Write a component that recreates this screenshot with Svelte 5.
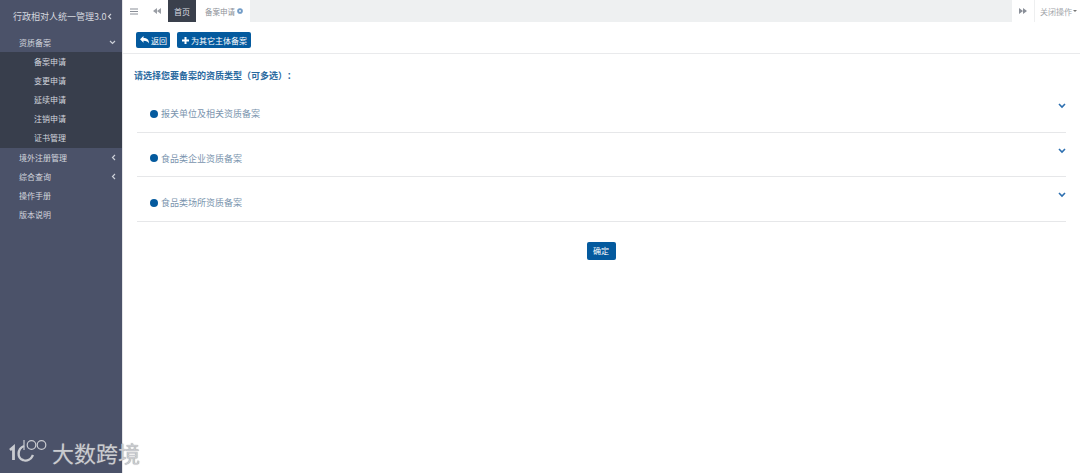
<script>
  const subItems = ["备案申请", "变更申请", "延续申请", "注销申请", "证书管理"];
  const types = ["报关单位及相关资质备案", "食品类企业资质备案", "食品类场所资质备案"];
</script>

<div class="page">
  <aside class="sidebar">
    <div class="brand">
      <span>行政相对人统一管理3.0</span>
      <svg class="chev" width="5" height="7" viewBox="0 0 5 7"><path d="M4 1 1.500 3.500 4 6" /></svg>
    </div>
    <div class="nav-item open">
      <span>资质备案</span>
      <svg class="chev" width="7" height="5" viewBox="0 0 7 5"><path d="M1 1 3.500 3.500 6 1" /></svg>
    </div>
    <div class="sub">
      {#each subItems as item}
        <div class="sub-item">{item}</div>
      {/each}
    </div>
    <div class="nav-item">
      <span>境外注册管理</span>
      <svg class="chev" width="5" height="7" viewBox="0 0 5 7"><path d="M4 1 1.500 3.500 4 6" /></svg>
    </div>
    <div class="nav-item">
      <span>综合查询</span>
      <svg class="chev" width="5" height="7" viewBox="0 0 5 7"><path d="M4 1 1.500 3.500 4 6" /></svg>
    </div>
    <div class="nav-item"><span>操作手册</span></div>
    <div class="nav-item"><span>版本说明</span></div>
  </aside>

  <div class="main">
    <div class="tabs">
      <div class="tab-btn menu">
        <svg width="8" height="7" viewBox="0 0 8 7"><path d="M0 1h8M0 3.500h8M0 6h8" stroke="#8a8f98" fill="none" /></svg>
      </div>
      <div class="tab-btn back">
        <svg width="8" height="6" viewBox="0 0 8 6"><path d="M4 0v6L0 3zM8 0v6L4 3z" fill="#9a9ea5" /></svg>
      </div>
      <div class="tab active">首页</div>
      <div class="tab current">
        备案申请
        <svg width="6" height="6" viewBox="0 0 7 7">
          <circle cx="3.500" cy="3.500" r="3.300" fill="#6f9ac6" />
          <path d="M2.200 2.200 4.800 4.800M4.800 2.200 2.200 4.800" stroke="#fff" stroke-width=".8" />
        </svg>
      </div>
      <div class="tab-fill"></div>
      <div class="tab-btn forward">
        <svg width="8" height="6" viewBox="0 0 8 6"><path d="M0 0v6l4-3zM4 0v6l4-3z" fill="#8a8f98" /></svg>
      </div>
      <div class="close-ops">关闭操作<i></i></div>
    </div>

    <div class="toolbar">
      <button class="btn">
        <svg width="9" height="8" viewBox="0 0 9 8"><path d="M3.500 0v2C7 2 9 3.500 9 7.500 8 5.500 6.500 4.700 3.500 4.700v2L0 3.300z" fill="#fff" /></svg>
        返回
      </button>
      <button class="btn wide">
        <svg width="7" height="7" viewBox="0 0 7 7"><path d="M2.500 0h2v2.500H7v2H4.500V7h-2V4.500H0v-2h2.500z" fill="#fff" /></svg>
        为其它主体备案
      </button>
    </div>

    <div class="content">
      <h3 class="prompt">请选择您要备案的资质类型（可多选）：</h3>
      <div class="type-list">
        {#each types as t}
          <div class="type-row">
            <span class="dot"></span>
            <span class="type-name">{t}</span>
            <svg class="type-chev" width="8" height="6" viewBox="0 0 8 6"><path d="M1 1 4 4 7 1" /></svg>
          </div>
        {/each}
      </div>
      <div class="confirm-wrap">
        <button class="btn confirm">确定</button>
      </div>
    </div>
  </div>

  <div class="watermark">
    <svg width="42" height="26" viewBox="0 0 42 26" fill="none" stroke="#c9cbd0">
      <path d="M2 11 5.500 8V21" stroke-width="2.800" />
      <path d="M16 7C9 10 9 19 15 21 19 22.500 23 20.500 25 16" stroke-width="2.400" />
      <path d="M16 1V11" stroke-width="1.200" />
      <circle cx="23.500" cy="6" r="4.300" stroke-width="1.200" />
      <circle cx="33.500" cy="6" r="4.300" stroke-width="1.200" />
    </svg>
    <span>大数跨境</span>
  </div>
</div>

<style>
  :global(body) {
    margin: 0;
    background: #fff;
  }

  .page {
    position: relative;
    display: flex;
    width: 1080px;
    height: 473px;
    overflow: hidden;
    font-family: "Noto Sans CJK SC", "Liberation Sans", sans-serif;
    font-size: 8px;
  }

  .sidebar {
    flex: 0 0 123px;
    background: #4b5269;
    color: #d3d6de;
    border-right: 1px solid #e4e5e8;
    box-sizing: border-box;
  }

  .brand {
    display: flex;
    align-items: center;
    justify-content: space-between;
    height: 33px;
    padding: 0 10px 0 13px;
    font-size: 9px;
    color: #d5d8df;
    white-space: nowrap;
  }

  .nav-item {
    display: flex;
    align-items: center;
    justify-content: space-between;
    height: 19px;
    padding: 0 6px 0 19px;
  }

  .chev {
    fill: none;
    stroke: #ccd0d8;
    stroke-width: 1.200;
  }

  .sub {
    background: #383e4c;
    padding-bottom: 1px;
  }

  .sub-item {
    display: flex;
    align-items: center;
    height: 19px;
    padding-left: 34px;
  }

  .main {
    flex: 1;
    display: flex;
    flex-direction: column;
    min-width: 0;
  }

  .tabs {
    display: flex;
    align-items: stretch;
    height: 22px;
    color: #8d9198;
  }

  .tab-btn {
    display: flex;
    align-items: center;
    justify-content: center;
  }

  .menu {
    width: 22px;
  }

  .back {
    width: 23px;
  }

  .tab {
    display: flex;
    align-items: center;
    gap: 2px;
    padding: 0 6px;
  }

  .tab.active {
    background: #3a404c;
    color: #d9dbe0;
  }

  .tab.current {
    padding: 0 7px 0 9px;
    font-size: 7.500px;
  }

  .tab-fill {
    flex: 1;
    background: #eef0f1;
  }

  .forward {
    width: 22px;
    border-right: 1px solid #eeeff0;
  }

  .close-ops {
    display: flex;
    align-items: center;
    gap: 1px;
    width: 45px;
    padding-left: 5px;
    box-sizing: border-box;
    color: #a3a6ab;
    white-space: nowrap;
  }

  .close-ops i {
    width: 0;
    height: 0;
    border: 2px solid transparent;
    border-top-color: #777;
    border-bottom: 0;
  }

  .toolbar {
    display: flex;
    gap: 7px;
    height: 32px;
    padding: 10px 0 0 13px;
    box-sizing: border-box;
    border-bottom: 1px solid #e9eaec;
  }

  .btn {
    display: inline-flex;
    align-items: center;
    gap: 2px;
    height: 16px;
    padding: 0 3px 0 4px;
    border: 0;
    border-radius: 2px;
    background: #045a9e;
    color: #fff;
    font: inherit;
  }

  .btn.wide {
    padding: 0 4px 0 5px;
  }

  .content {
    padding: 16px 14px 0 11px;
  }

  .prompt {
    margin: 0 0 6px;
    font-size: 9px;
    line-height: 12px;
    font-weight: 700;
    color: #2a6a9f;
    text-spacing-trim: space-all;
    font-feature-settings: "chws" 0;
  }

  .type-list {
    margin: 0 0 0 3px;
  }

  .type-row {
    position: relative;
    display: flex;
    align-items: center;
    gap: 3px;
    height: 44.500px;
    padding: 8px 0 0 13px;
    box-sizing: border-box;
    border-bottom: 1px solid #e6e7e9;
  }

  .dot {
    width: 8px;
    height: 8px;
    border-radius: 50%;
    background: #045a9e;
  }

  .type-name {
    font-size: 9px;
    color: #7a94ae;
  }

  .type-chev {
    position: absolute;
    right: 0;
    top: 15px;
    fill: none;
    stroke: #2d6fb0;
    stroke-width: 1.600;
  }

  .confirm-wrap {
    display: flex;
    justify-content: center;
    padding: 20px 0 0 2px;
  }

  .confirm {
    height: 18px;
    padding: 0 6.500px;
  }

  .watermark {
    position: absolute;
    left: 8px;
    bottom: 8px;
    display: flex;
    align-items: center;
    color: #c9cbd0;
    font-size: 22px;
    line-height: 26px;
    gap: 2px;
  }

  .watermark span {
    text-shadow: 0 0 1px #888;
  }
</style>
